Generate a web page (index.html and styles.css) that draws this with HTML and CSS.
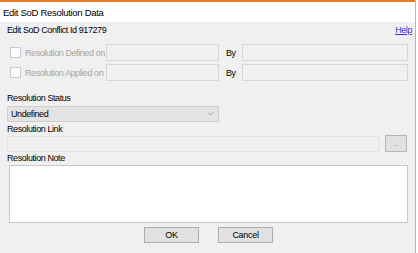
FILE: index.html
```html
<!DOCTYPE html>
<html lang="en">
<head>
    <meta charset="UTF-8">
    <title>Edit SoD Resolution Data</title>
    <link rel="stylesheet" href="styles.css">
</head>
<body>
    <div class="window">
        <div class="titlebar">Edit SoD Resolution Data</div>
        <div class="content">
            <div class="header-row">
                <span>Edit SoD Conflict Id 917279</span>
                <a class="help" href="#">Help</a>
            </div>

            <div class="check-row first">
                <label class="check-label"><span class="box"></span>Resolution Defined on</label>
                <div class="field date"></div>
                <span class="by">By</span>
                <div class="field by-field"></div>
            </div>
            <div class="check-row">
                <label class="check-label"><span class="box"></span>Resolution Applied on</label>
                <div class="field date"></div>
                <span class="by">By</span>
                <div class="field by-field"></div>
            </div>

            <div class="label status-label">Resolution Status</div>
            <div class="select">
                <span>Undefined</span>
                <svg width="7" height="4" viewBox="0 0 7 4"><path d="M1 0.5 L3.5 3 L6 0.5" fill="none" stroke="#a0a0a0" stroke-width="1"/></svg>
            </div>

            <div class="label link-label">Resolution Link</div>
            <div class="link-row">
                <div class="field link-field"></div>
                <button class="browse">...</button>
            </div>

            <div class="label note-label">Resolution Note</div>
            <div class="note"></div>

            <div class="buttons">
                <button class="btn">OK</button>
                <button class="btn">Cancel</button>
            </div>
        </div>
    </div>
</body>
</html>
```

FILE: styles.css
```css
body {
    margin: 0;
    padding: 0;
    background-color: white;
    font-family: "Liberation Sans", Arial, sans-serif;
    font-size: 9px;
    letter-spacing: -0.42px;
    color: #000;
}
.window {
    width: 415px;
    height: 253px;
    border-right: 1px solid #b8b8b8;
    background-color: #f0f0f0;
    overflow: hidden;
}
.titlebar {
    border-top: 2px solid #e87d1e;
    height: 20px;
    line-height: 21px;
    background-color: white;
    padding-left: 3px;
    font-size: 9.5px;
    letter-spacing: -0.3px;
}
.content {
    padding: 0 7px;
}
.header-row {
    display: flex;
    justify-content: space-between;
    align-items: center;
    height: 16px;
    padding-right: 3px;
    margin-right: -7px;
}
.help {
    color: #3333dd;
    text-decoration: underline;
}
.check-row {
    display: flex;
    align-items: center;
    height: 17px;
    margin-top: 3px;
}
.check-row.first {
    margin-top: 6px;
}
.check-label {
    display: flex;
    align-items: center;
    color: #a6a6a6;
    width: 99px;
    white-space: nowrap;
}
.box {
    width: 9px;
    height: 9px;
    border: 1px solid #cccccc;
    background-color: #fbfbfb;
    margin-left: 3px;
    margin-right: 4px;
    flex-shrink: 0;
}
.field {
    box-sizing: border-box;
    height: 17px;
    border: 1px solid #d6d6d6;
    background-color: #f0f0f0;
}
.date {
    width: 113px;
}
.by {
    width: 16px;
    margin-left: 7px;
}
.by-field {
    width: 166px;
}
.label {
    height: 12px;
    line-height: 12px;
}
.status-label {
    margin-top: 11px;
}
.select {
    box-sizing: border-box;
    display: flex;
    justify-content: space-between;
    align-items: center;
    width: 212px;
    height: 16px;
    padding: 0 4px 0 3px;
    margin-top: 2px;
    border: 1px solid #cfcfcf;
    background-color: #e3e3e3;
}
.link-label {
    margin-top: 1px;
}
.link-row {
    display: flex;
    align-items: center;
    height: 17px;
}
.link-field {
    width: 373px;
    height: 16px;
    border-color: #e2e2e2;
}
.browse {
    box-sizing: border-box;
    width: 22px;
    height: 17px;
    margin-left: 5px;
    padding: 0;
    border: 1px solid #b4b4b4;
    background-color: #e1e1e1;
    color: #8a8a8a;
    font-size: 7px;
    font-family: "Liberation Sans", Arial, sans-serif;
}
.note {
    box-sizing: border-box;
    width: 399px;
    height: 58px;
    margin-top: 1px;
    margin-left: 2px;
    border: 1px solid #c8c8c8;
    background-color: white;
}
.buttons {
    display: flex;
    gap: 19px;
    margin-top: 4px;
    padding-left: 137px;
}
.btn {
    box-sizing: border-box;
    width: 55px;
    height: 16px;
    padding: 0;
    border: 1px solid #adadad;
    background-color: #e1e1e1;
    font-family: "Liberation Sans", Arial, sans-serif;
    font-size: 9px;
    letter-spacing: -0.3px;
}
```
